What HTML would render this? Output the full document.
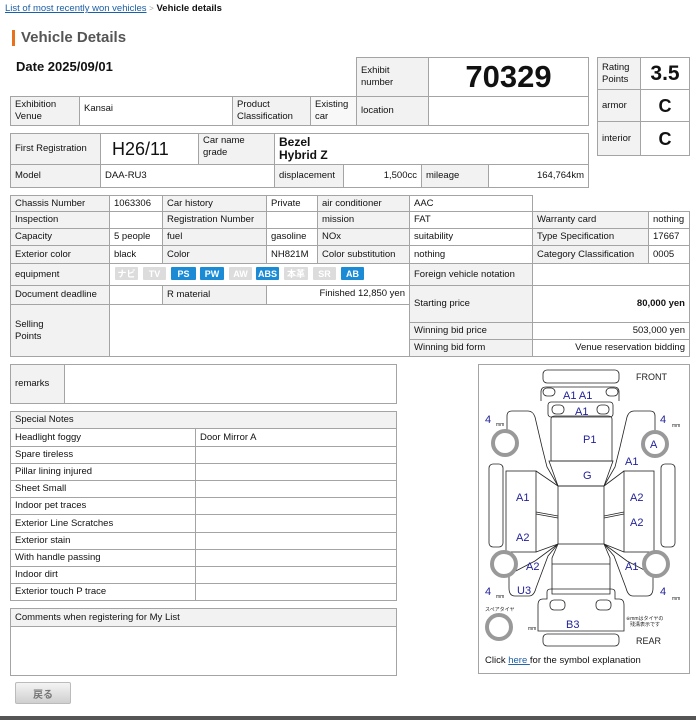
<!DOCTYPE html>
<html><head><meta charset="utf-8">
<style>
*{box-sizing:border-box;margin:0;padding:0}
body{width:696px;height:720px;position:relative;background:#fff;font-family:"Liberation Sans","Noto Sans CJK JP",sans-serif;color:#111;overflow:hidden}
.c{position:absolute;border:1px solid #a4a4a4;font-size:9.5px;display:flex;align-items:center;padding:0 4px;line-height:12px;background:#fff;white-space:nowrap}
.g{background:#f2f2f2}
.r{justify-content:flex-end}
.m{justify-content:center}
.t{align-items:flex-start;padding-top:2px}
.b{position:absolute;top:267px;height:13px;width:23px;font-size:9px;color:#fff;font-weight:bold;display:flex;align-items:center;justify-content:center;border-radius:1px}
.bg{background:#dcdcdc}.bb{background:#1b8bd6}
</style></head><body>
<div style="position:absolute;left:5px;top:3px;font-size:9.5px;white-space:nowrap"><span style="color:#1a5fa8;text-decoration:underline">List of most recently won vehicles</span> <span style="color:#aaa;font-size:8px">&gt;</span> <b>Vehicle details</b></div>
<div style="position:absolute;left:12px;top:30px;width:3px;height:16px;background:#e8711c"></div>
<div style="position:absolute;left:21px;top:29px;font-size:15px;font-weight:bold;color:#555">Vehicle Details</div>
<div style="position:absolute;left:16px;top:59px;font-size:13px;font-weight:bold">Date 2025/09/01</div>

<div class="c g" style="left:356px;top:57px;width:73px;height:40px">Exhibit<br>number</div>
<div class="c m" style="left:428px;top:57px;width:161px;height:40px;font-size:31px;font-weight:bold;line-height:34px">70329</div>
<div class="c g" style="left:10px;top:96px;width:70px;height:30px">Exhibition<br>Venue</div>
<div class="c" style="left:79px;top:96px;width:154px;height:30px;align-items:flex-start;padding-top:6px">Kansai</div>
<div class="c g" style="left:232px;top:96px;width:79px;height:30px">Product<br>Classification</div>
<div class="c g" style="left:310px;top:96px;width:47px;height:30px;background:#f8f8f8">Existing<br>car</div>
<div class="c g" style="left:356px;top:96px;width:73px;height:30px">location</div>
<div class="c" style="left:428px;top:96px;width:161px;height:30px"></div>

<div class="c g" style="left:597px;top:57px;width:44px;height:33px">Rating<br>Points</div>
<div class="c m" style="left:640px;top:57px;width:50px;height:33px;font-size:21px;font-weight:bold">3.5</div>
<div class="c g" style="left:597px;top:89px;width:44px;height:33px">armor</div>
<div class="c m" style="left:640px;top:89px;width:50px;height:33px;font-size:18px;font-weight:bold">C</div>
<div class="c g" style="left:597px;top:121px;width:44px;height:35px">interior</div>
<div class="c m" style="left:640px;top:121px;width:50px;height:35px;font-size:18px;font-weight:bold">C</div>

<div class="c g" style="left:10px;top:133px;width:91px;height:32px">First Registration</div>
<div class="c" style="left:100px;top:133px;width:99px;height:32px;font-size:18px;padding-left:11px">H26/11</div>
<div class="c g t" style="left:198px;top:133px;width:77px;height:32px;padding-top:1px">Car name<br>grade</div>
<div class="c" style="left:274px;top:133px;width:315px;height:32px;font-size:12px;font-weight:bold;line-height:13px">Bezel<br>Hybrid Z</div>
<div class="c g" style="left:10px;top:164px;width:91px;height:24px">Model</div>
<div class="c" style="left:100px;top:164px;width:175px;height:24px">DAA-RU3</div>
<div class="c g" style="left:274px;top:164px;width:70px;height:24px">displacement</div>
<div class="c r" style="left:343px;top:164px;width:79px;height:24px">1,500cc</div>
<div class="c g" style="left:421px;top:164px;width:68px;height:24px">mileage</div>
<div class="c r" style="left:488px;top:164px;width:101px;height:24px">164,764km</div>

<!-- big table -->
<div class="c g" style="left:10px;top:195px;width:100px;height:17px">Chassis Number</div>
<div class="c" style="left:109px;top:195px;width:54px;height:17px">1063306</div>
<div class="c g" style="left:162px;top:195px;width:105px;height:17px">Car history</div>
<div class="c" style="left:266px;top:195px;width:52px;height:17px">Private</div>
<div class="c g" style="left:317px;top:195px;width:93px;height:17px">air conditioner</div>
<div class="c" style="left:409px;top:195px;width:124px;height:17px">AAC</div>

<div class="c g" style="left:10px;top:211px;width:100px;height:18px">Inspection</div>
<div class="c" style="left:109px;top:211px;width:54px;height:18px"></div>
<div class="c g" style="left:162px;top:211px;width:105px;height:18px">Registration Number</div>
<div class="c" style="left:266px;top:211px;width:52px;height:18px"></div>
<div class="c g" style="left:317px;top:211px;width:93px;height:18px">mission</div>
<div class="c" style="left:409px;top:211px;width:124px;height:18px">FAT</div>
<div class="c g" style="left:532px;top:211px;width:117px;height:18px">Warranty card</div>
<div class="c" style="left:648px;top:211px;width:42px;height:18px">nothing</div>

<div class="c g" style="left:10px;top:228px;width:100px;height:18px">Capacity</div>
<div class="c" style="left:109px;top:228px;width:54px;height:18px">5 people</div>
<div class="c g" style="left:162px;top:228px;width:105px;height:18px">fuel</div>
<div class="c" style="left:266px;top:228px;width:52px;height:18px">gasoline</div>
<div class="c g" style="left:317px;top:228px;width:93px;height:18px">NOx</div>
<div class="c" style="left:409px;top:228px;width:124px;height:18px">suitability</div>
<div class="c g" style="left:532px;top:228px;width:117px;height:18px">Type Specification</div>
<div class="c" style="left:648px;top:228px;width:42px;height:18px">17667</div>

<div class="c g" style="left:10px;top:245px;width:100px;height:19px">Exterior color</div>
<div class="c" style="left:109px;top:245px;width:54px;height:19px">black</div>
<div class="c g" style="left:162px;top:245px;width:105px;height:19px">Color</div>
<div class="c" style="left:266px;top:245px;width:52px;height:19px">NH821M</div>
<div class="c g" style="left:317px;top:245px;width:93px;height:19px">Color substitution</div>
<div class="c" style="left:409px;top:245px;width:124px;height:19px">nothing</div>
<div class="c g" style="left:532px;top:245px;width:117px;height:19px">Category Classification</div>
<div class="c" style="left:648px;top:245px;width:42px;height:19px">0005</div>

<div class="c g" style="left:10px;top:263px;width:100px;height:23px">equipment</div>
<div class="c" style="left:109px;top:263px;width:301px;height:23px"></div>
<div class="c g" style="left:409px;top:263px;width:124px;height:23px">Foreign vehicle notation</div>
<div class="c" style="left:532px;top:263px;width:158px;height:23px"></div>
<div class="b bg" style="left:115px">ナビ</div>
<div class="b bg" style="left:143px">TV</div>
<div class="b bb" style="left:171px;width:25px">PS</div>
<div class="b bb" style="left:200px;width:24px">PW</div>
<div class="b bg" style="left:229px">AW</div>
<div class="b bb" style="left:256px">ABS</div>
<div class="b bg" style="left:284px;width:24px">本革</div>
<div class="b bg" style="left:313px">SR</div>
<div class="b bb" style="left:341px">AB</div>

<div class="c g" style="left:10px;top:285px;width:100px;height:20px">Document deadline</div>
<div class="c" style="left:109px;top:285px;width:54px;height:20px"></div>
<div class="c g" style="left:162px;top:285px;width:105px;height:20px">R material</div>
<div class="c r t" style="left:266px;top:285px;width:144px;height:20px">Finished 12,850 yen</div>
<div class="c g" style="left:10px;top:304px;width:100px;height:53px">Selling<br>Points</div>
<div class="c" style="left:109px;top:304px;width:301px;height:53px"></div>
<div class="c g" style="left:409px;top:285px;width:124px;height:38px">Starting price</div>
<div class="c r" style="left:532px;top:285px;width:158px;height:38px;font-weight:bold">80,000 yen</div>
<div class="c g" style="left:409px;top:322px;width:124px;height:18px">Winning bid price</div>
<div class="c r" style="left:532px;top:322px;width:158px;height:18px">503,000 yen</div>
<div class="c g" style="left:409px;top:339px;width:124px;height:18px">Winning bid form</div>
<div class="c r" style="left:532px;top:339px;width:158px;height:18px">Venue reservation bidding</div>

<div class="c g" style="left:10px;top:364px;width:55px;height:40px">remarks</div>
<div class="c" style="left:64px;top:364px;width:333px;height:40px"></div>

<div class="c g" style="left:10px;top:411px;width:387px;height:18px">Special Notes</div>
<div class="c" style="left:10px;top:428px;width:186px;height:19px">Headlight foggy</div><div class="c" style="left:195px;top:428px;width:202px;height:19px">Door Mirror A</div>
<div class="c" style="left:10px;top:446px;width:186px;height:18px">Spare tireless</div><div class="c" style="left:195px;top:446px;width:202px;height:18px"></div>
<div class="c" style="left:10px;top:463px;width:186px;height:18px">Pillar lining injured</div><div class="c" style="left:195px;top:463px;width:202px;height:18px"></div>
<div class="c" style="left:10px;top:480px;width:186px;height:18px">Sheet Small</div><div class="c" style="left:195px;top:480px;width:202px;height:18px"></div>
<div class="c" style="left:10px;top:497px;width:186px;height:18px">Indoor pet traces</div><div class="c" style="left:195px;top:497px;width:202px;height:18px"></div>
<div class="c" style="left:10px;top:514px;width:186px;height:19px">Exterior Line Scratches</div><div class="c" style="left:195px;top:514px;width:202px;height:19px"></div>
<div class="c" style="left:10px;top:532px;width:186px;height:18px">Exterior stain</div><div class="c" style="left:195px;top:532px;width:202px;height:18px"></div>
<div class="c" style="left:10px;top:549px;width:186px;height:18px">With handle passing</div><div class="c" style="left:195px;top:549px;width:202px;height:18px"></div>
<div class="c" style="left:10px;top:566px;width:186px;height:18px">Indoor dirt</div><div class="c" style="left:195px;top:566px;width:202px;height:18px"></div>
<div class="c" style="left:10px;top:583px;width:186px;height:18px">Exterior touch P trace</div><div class="c" style="left:195px;top:583px;width:202px;height:18px"></div>

<div class="c g" style="left:10px;top:608px;width:387px;height:19px">Comments when registering for My List</div>
<div class="c" style="left:10px;top:626px;width:387px;height:50px"></div>

<div style="position:absolute;left:15px;top:682px;width:56px;height:22px;border:1px solid #bbb;border-radius:2px;background:linear-gradient(#f4f4f4,#cfcfcf);font-size:10px;color:#777;font-weight:bold;display:flex;align-items:center;justify-content:center">戻る</div>
<div style="position:absolute;left:0;top:716px;width:696px;height:4px;background:#555"></div>

<!-- diagram -->
<div style="position:absolute;left:478px;top:364px;width:212px;height:310px;border:1px solid #a4a4a4"></div>
<svg style="position:absolute;left:0;top:0" width="696" height="720" viewBox="0 0 696 720" font-family="Liberation Sans, sans-serif">
<g fill="none" stroke="#222" stroke-width="0.8">
<rect x="543" y="370" width="76" height="13" rx="4"/>
<path d="M541 401 V392 q0-5 5-5 h68 q5 0 5 5 v9"/>
<rect x="543" y="388" width="12" height="8" rx="4"/><rect x="606" y="388" width="12" height="8" rx="4"/>
<rect x="548" y="402" width="65" height="15" rx="3"/>
<rect x="552" y="405" width="12" height="9" rx="4"/><rect x="597" y="405" width="12" height="9" rx="4"/>
<path d="M551 419 q0-3 4-3 h53 q4 0 4 3 v42 h-61 z"/>
<path d="M549 461 h64 l-9 25 h-46 z"/>
<rect x="558" y="486" width="46" height="58"/>
<path d="M558 544 l-6 14 v36 h58 v-36 l-6-14"/>
<path d="M552 564 h58"/>
<path d="M538 631 v-26 q0-6 5-6 l4 0 v-7 q0-3 4-3 h60 q4 0 4 3 v7 l4 0 q5 0 5 6 v26 z"/>
<rect x="550" y="600" width="15" height="10" rx="4"/><rect x="596" y="600" width="15" height="10" rx="4"/>
<rect x="543" y="634" width="76" height="12" rx="4"/>
<!-- left side -->
<path d="M507 432 v-16 q0-5 5-5 h16 q5 0 7 6 l7 30 l5 20 l11 19"/>
<rect x="489" y="464" width="14" height="83" rx="4"/>
<rect x="506" y="471" width="30" height="81"/>
<path d="M536 471 l22 15 M536 512 l22 4 M536 514 l22 4 M536 552 l22-8"/>
<path d="M510 574 l25-13 l23-17 M509 574 v14 q0 8 6 8 h14 q5 0 7-8 l12-32 l10-12"/>
<!-- right side -->
<path d="M655 432 v-16 q0-5-5-5 h-16 q-5 0-7 6 l-7 30 l-5 20 l-11 19"/>
<rect x="661" y="464" width="14" height="83" rx="4"/>
<rect x="624" y="471" width="30" height="81"/>
<path d="M624 471 l-20 15 M624 512 l-20 4 M624 514 l-20 4 M624 552 l-20-8"/>
<path d="M652 574 l-25-13 l-23-17 M653 574 v14 q0 8-6 8 h-14 q-5 0-7-8 l-12-32 l-10-12"/>
</g>
<g fill="#fff" stroke="#999" stroke-width="4">
<circle cx="505" cy="443" r="12"/><circle cx="655" cy="444" r="12"/>
<circle cx="504" cy="564" r="12"/><circle cx="656" cy="564" r="12"/>
<circle cx="499" cy="627" r="12"/>
</g>
<g fill="#22229a" font-size="11">
<text x="563" y="399">A1 A1</text><text x="575" y="415">A1</text>
<text x="583" y="443">P1</text><text x="583" y="479">G</text>
<text x="650" y="448">A</text><text x="625" y="465">A1</text>
<text x="516" y="501">A1</text><text x="516" y="541">A2</text>
<text x="630" y="501">A2</text><text x="630" y="526">A2</text>
<text x="526" y="570">A2</text><text x="625" y="570">A1</text>
<text x="517" y="594">U3</text><text x="566" y="628">B3</text>
<text x="485" y="423">4</text><text x="660" y="423">4</text>
<text x="485" y="595">4</text><text x="660" y="595">4</text>
</g>
<g fill="#222" font-size="5">
<text x="496" y="426">mm</text><text x="672" y="427">mm</text>
<text x="496" y="598">mm</text><text x="672" y="600">mm</text>
<text x="528" y="630">mm</text>
<text x="485" y="611">スペアタイヤ</text>
<text x="626" y="620">※mmはタイヤの</text><text x="630" y="626">残溝表示です</text>
</g>
<text x="636" y="380" font-size="9" fill="#222">FRONT</text>
<text x="636" y="644" font-size="9" fill="#222">REAR</text>
<text x="485" y="663" font-size="9.5" fill="#111">Click <tspan fill="#1a5fa8" text-decoration="underline">here </tspan>for the symbol explanation</text>
</svg>
</body></html>
